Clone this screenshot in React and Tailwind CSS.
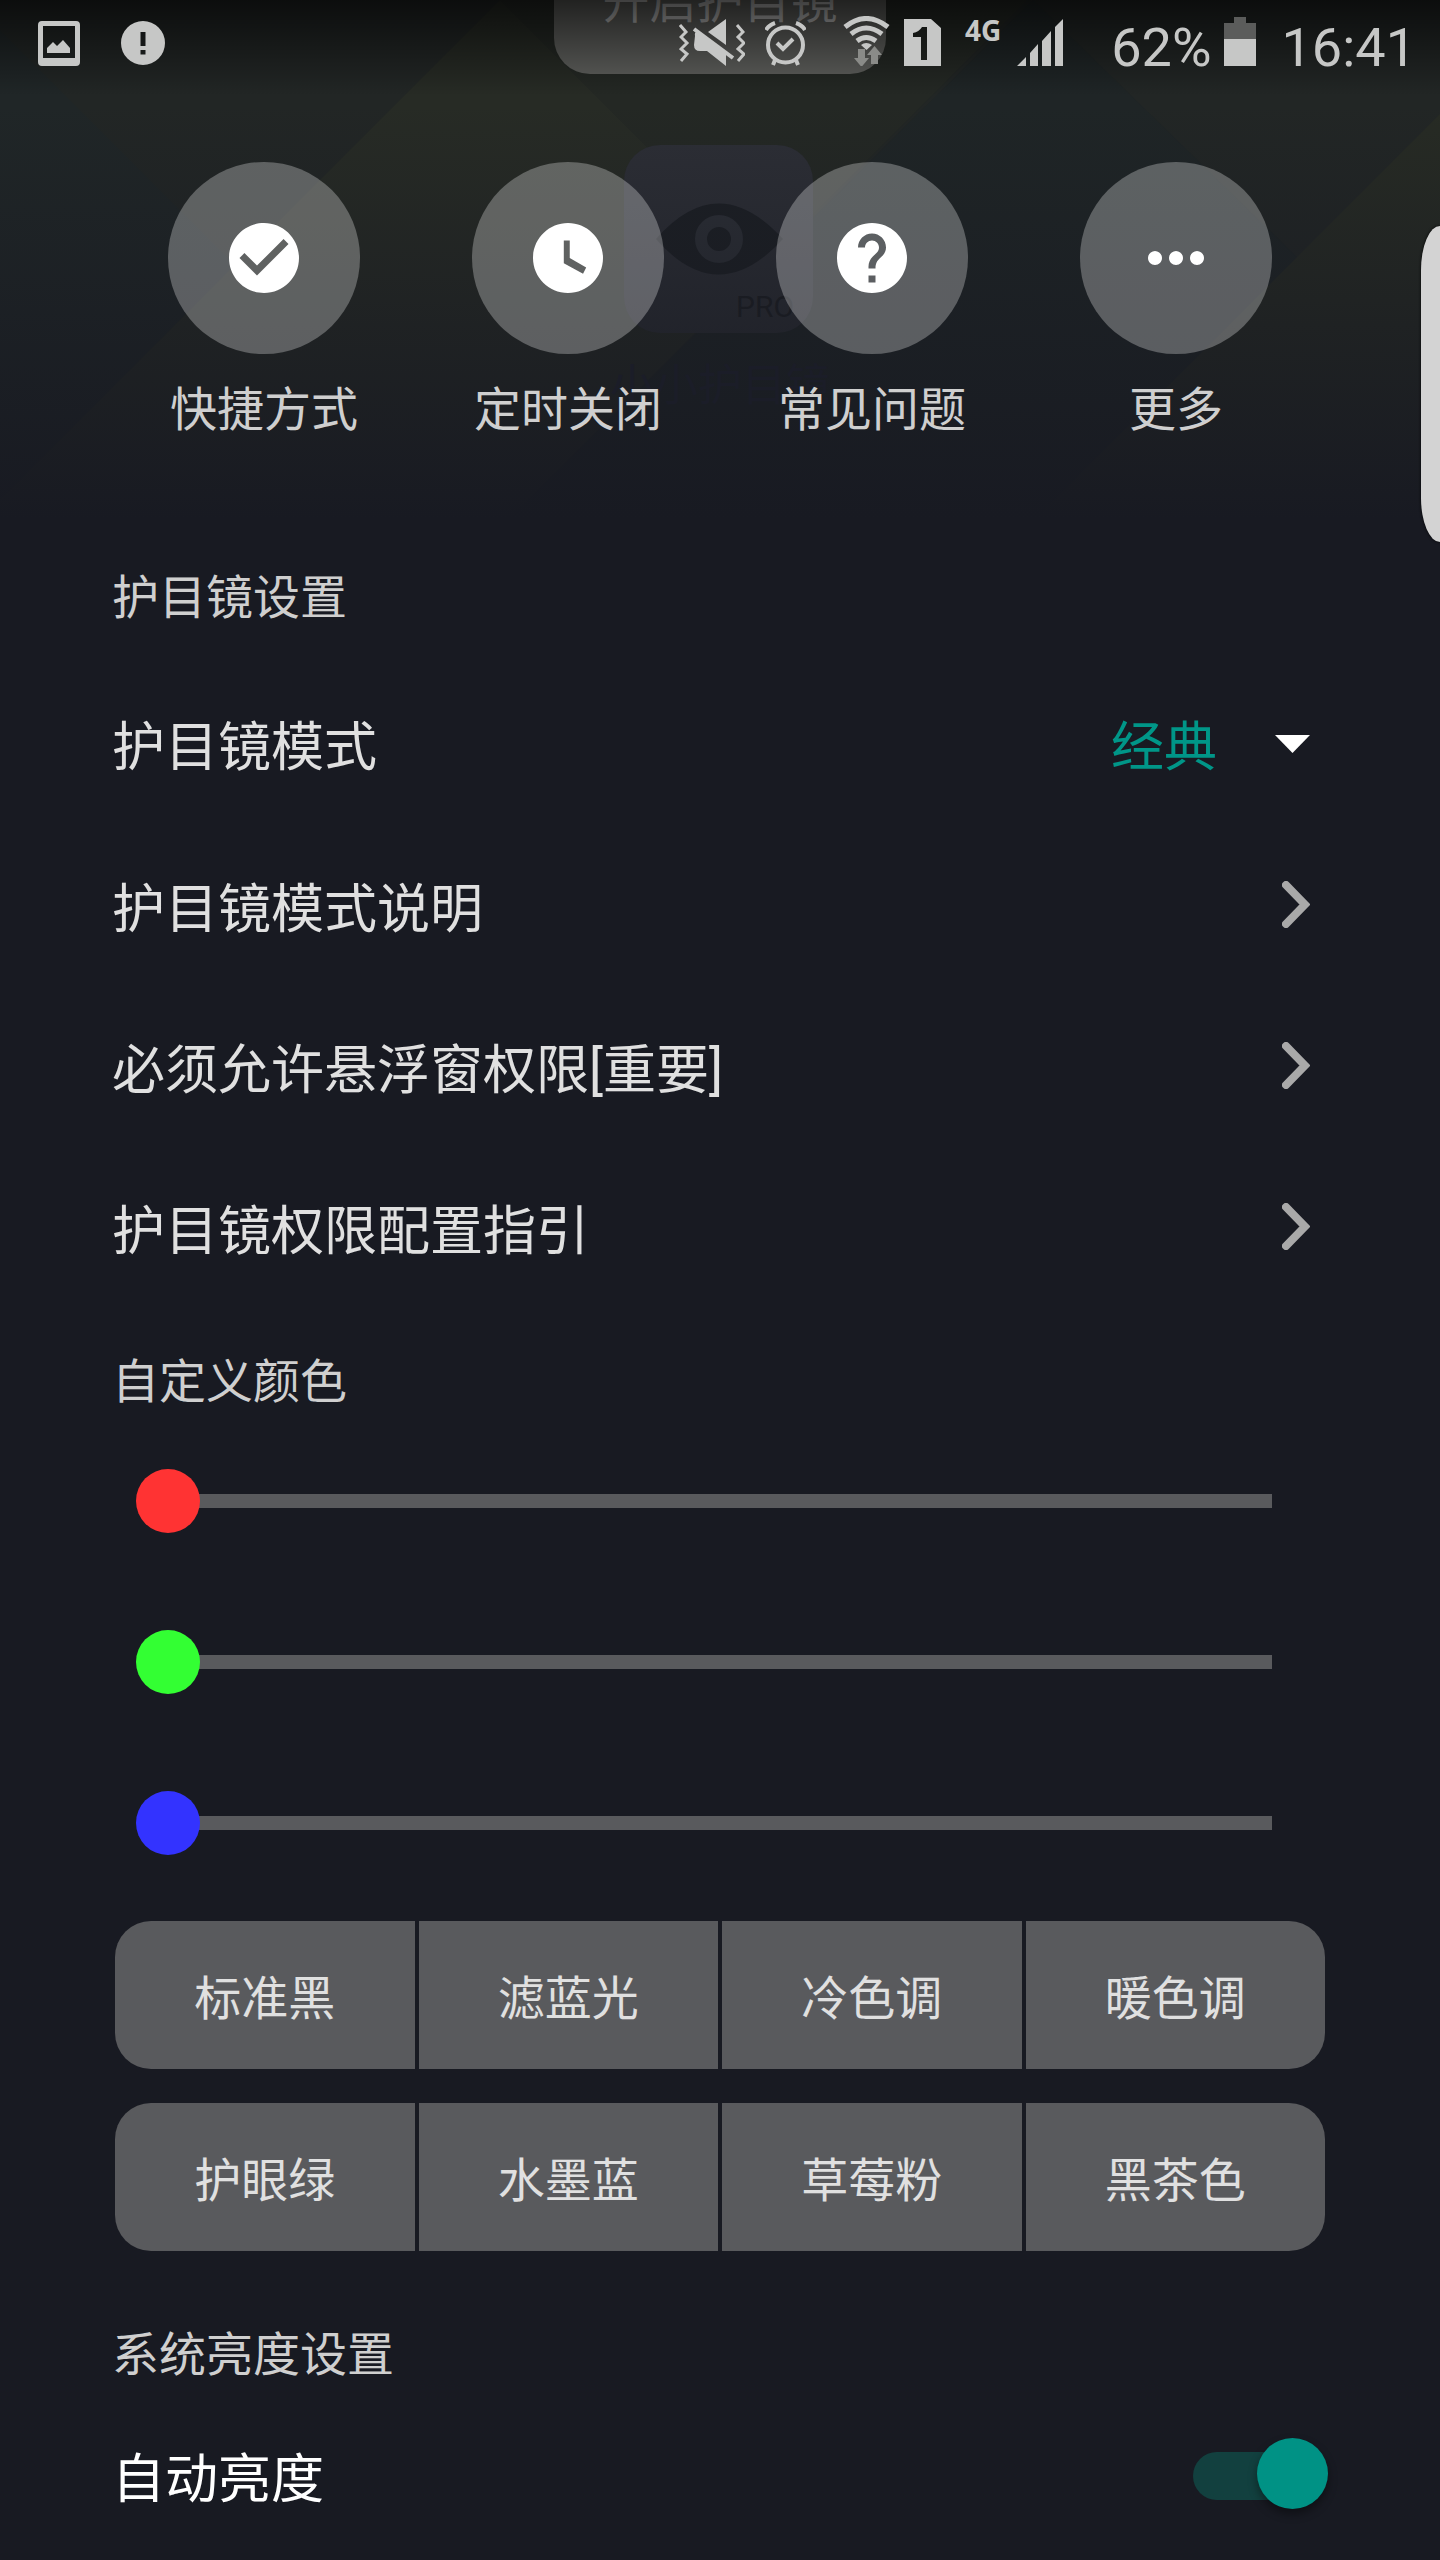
import React, { useState } from 'react';

const shortcuts = [
  {
    label: '快捷方式',
    path: 'M12 2C6.48 2 2 6.48 2 12s4.48 10 10 10 10-4.48 10-10S17.52 2 12 2zm-2 15l-5-5 1.41-1.41L10 14.17l7.59-7.59L19 8l-9 9z',
  },
  {
    label: '定时关闭',
    path: 'M12 2C6.500 2 2 6.500 2 12s4.500 10 10 10 10-4.500 10-10S17.500 2 12 2zm4.300 14.500L10.800 13.500V7h1.700v5l4.700 2.700-.9 1.800z',
  },
  {
    label: '常见问题',
    path: 'M12 2C6.48 2 2 6.48 2 12s4.48 10 10 10 10-4.48 10-10S17.52 2 12 2zm1 17h-2v-2h2v2zm2.07-7.75l-.9.92C13.45 12.9 13 13.5 13 15h-2v-.5c0-1.1.45-2.1 1.17-2.83l1.24-1.26c.37-.36.59-.86.59-1.41 0-1.1-.9-2-2-2s-2 .9-2 2H8c0-2.21 1.79-4 4-4s4 1.79 4 4c0 .88-.36 1.68-.93 2.25z',
  },
  {
    label: '更多',
    path: 'M6 10c-1.1 0-2 .9-2 2s.9 2 2 2 2-.9 2-2-.9-2-2-2zm12 0c-1.1 0-2 .9-2 2s.9 2 2 2 2-.9 2-2-.9-2-2-2zm-6 0c-1.1 0-2 .9-2 2s.9 2 2 2 2-.9 2-2-.9-2-2-2z',
  },
];

const links = ['护目镜模式说明', '必须允许悬浮窗权限[重要]', '护目镜权限配置指引'];

const presets = [
  ['标准黑', '滤蓝光', '冷色调', '暖色调'],
  ['护眼绿', '水墨蓝', '草莓粉', '黑茶色'],
];

const channels = [
  { name: '红色', thumb: '[&::-webkit-slider-thumb]:bg-[#ff3333]' },
  { name: '绿色', thumb: '[&::-webkit-slider-thumb]:bg-[#33ff33]' },
  { name: '蓝色', thumb: '[&::-webkit-slider-thumb]:bg-[#3333ff]' },
];

// Dimmed home page that shows through behind the settings panel
const Backdrop = () => (
  <svg
    className="absolute inset-x-0 top-0 w-full h-[520px]"
    viewBox="0 0 1440 520"
    preserveAspectRatio="xMidYMin slice"
    aria-hidden="true"
  >
    <defs>
      <linearGradient id="fade" x1="0" y1="0" x2="0" y2="1">
        <stop offset="0" stopColor="#181a22" stopOpacity="0" />
        <stop offset="0.2" stopColor="#181a22" stopOpacity="0" />
        <stop offset="1" stopColor="#181a22" stopOpacity="1" />
      </linearGradient>
      <linearGradient id="shade" x1="0" y1="0" x2="0" y2="1">
        <stop offset="0" stopColor="#000" stopOpacity="0.65" />
        <stop offset="1" stopColor="#000" stopOpacity="0" />
      </linearGradient>
    </defs>
    <rect width="1440" height="520" fill="#222625" />
    <path d="M0 30L235 265 0 500z" fill="#202627" />
    <path d="M500 0L764 264 508 520H0V500z" fill="#272b25" />
    <path d="M500 0H1027L764 264z" fill="#242824" />
    <path d="M1033 0L1300 260 1040 520H508z" fill="#1f2526" />
    <path d="M1440 114V520H1034z" fill="#272b24" />
    <rect x="624" y="145" width="189" height="188" rx="36" fill="#2d2f36" />
    <path d="M656 239Q718 168 783 239Q718 310 656 239z" fill="#1c1f24" />
    <circle cx="719" cy="239" r="18" fill="none" stroke="#2d3037" strokeWidth="12" />
    <text x="736" y="317" fontSize="30" fill="#1b1d22" fontFamily="Roboto, sans-serif">PRO</text>
    <rect width="1440" height="520" fill="url(#fade)" />
    <text x="720" y="401" fontSize="44" fill="#1b1d28" textAnchor="middle" fontFamily='"Noto Sans CJK SC", sans-serif'>
      小小护目镜
    </text>
    <rect x="554" y="-60" width="332" height="134" rx="36" fill="#5f605d" />
    <text x="720" y="18" fontSize="47" fill="#b5b5b5" textAnchor="middle" fontFamily='"Noto Sans CJK SC", sans-serif'>
      开启护目镜
    </text>
    <rect width="1440" height="96" fill="url(#shade)" />
  </svg>
);

const StatusBar = () => (
  <header className="relative flex items-baseline h-[86px] pt-4 pl-[38px] pr-6 text-[#c6c7c6] fill-[#c6c7c6] font-[Roboto,sans-serif] text-[54px] leading-[56px]">
    {/* Screenshot */}
    <svg width="42" height="45" viewBox="0 0 42 45">
      <path fillRule="evenodd" d="M4 0H38Q42 0 42 4V41Q42 45 38 45H4Q0 45 0 41V4Q0 0 4 0zM5 5V37H37V5z" />
      <path d="M9 32V27L15 21 19 25 25 19 32 27V32z" />
    </svg>
    {/* Alert */}
    <svg className="ml-[41px]" width="44" height="45" viewBox="0 0 44 45">
      <path fillRule="evenodd" d="M22 0A22 22 0 1 0 22 44A22 22 0 1 0 22 0zM19.500 11V25H24.500V11zM19.500 29V33.500H24.500V29z" />
    </svg>

    {/* Vibrate */}
    <svg className="ml-auto" width="66" height="47" viewBox="0 0 66 47">
      <path d="M1 6L7 13 2 18 8 24 2 30 8 35 2 42M58 6L64 13 59 18 65 24 59 30 65 35 59 42" fill="none" stroke="#c6c7c6" strokeWidth="3" />
      <path d="M29 13L47 0V26zM16 17Q15 12 20 13L47 34V47L28 32H21Q15 32 15 26z" />
      <path d="M15 10L54 39" fill="none" stroke="#c6c7c6" strokeWidth="4" />
    </svg>
    {/* Alarm */}
    <svg className="ml-5" width="41" height="45" viewBox="0 0 41 45">
      <g fill="none" stroke="#c6c7c6" strokeWidth="4">
        <circle cx="20.500" cy="24" r="17.500" />
        <path d="M12 22L18 28 28 18M1 9Q4 4 10 2M40 9Q37 4 31 2M10 39L8 44M31 39L33 44" />
      </g>
    </svg>
    {/* Wifi */}
    <svg className="ml-[37px]" width="47" height="50" viewBox="0 0 47 50">
      <g fill="none" stroke="#c6c7c6" strokeWidth="5">
        <path d="M2 11Q23 -6 45 11" />
        <path d="M8 18Q23 6 39 18" />
        <path d="M14 25Q23 18 33 25" />
      </g>
      <path d="M18 29Q23 25 29 29L23.500 34z" />
      <path d="M15 33H22V42H26L18.500 51 11 42H15zM28 48V39H24L31.500 30 39 39H35V48z" fill="#8a8b88" />
    </svg>
    {/* Sim */}
    <svg className="ml-[14px]" width="37" height="47" viewBox="0 0 37 47">
      <path fillRule="evenodd" d="M0 0H27L37 9V47H0zM18 8Q15 13 9 14V18H17V41H23V8z" />
    </svg>
    <span className="ml-6 self-start font-['Noto_Sans',sans-serif] font-bold text-[28px] leading-[28px]">4G</span>
    {/* Signal */}
    <svg className="ml-4" width="46" height="47" viewBox="0 0 46 47">
      <path d="M0 47L9 38V47zM13 34L21 25V47H13zM25 22L34 12V47H25zM38 8L46 0V47H38z" />
    </svg>
    <span className="ml-12">62%</span>
    {/* Battery */}
    <svg className="ml-3" width="32" height="49" viewBox="0 0 32 49">
      <path d="M10 0H22V6H32V22H0V6H10z" fill="#5b5c5b" />
      <path d="M0 22H32V49H0z" />
    </svg>
    <span className="ml-[26px]">16:41</span>
  </header>
);

const SectionTitle = ({ children }) => (
  <h2 className="text-[47px] leading-[56px] text-[#cfcfcf]">{children}</h2>
);

const App = () => {
  const [mode, setMode] = useState('经典');
  const [color, setColor] = useState([0, 0, 0]);
  const [autoBrightness, setAutoBrightness] = useState(true);

  const handleColor = (index, value) => {
    setColor(color.map((c, i) => (i === index ? Number(value) : c)));
  };

  return (
    <div className="relative min-h-screen overflow-hidden bg-[#181a22] font-['Noto_Sans_CJK_SC',sans-serif] text-[#e0e0e0]">
      <Backdrop />
      <StatusBar />

      {/* Edge panel handle */}
      <div className="absolute right-0 top-[226px] w-[19px] h-[316px] bg-[#d3d3d3] [border-radius:19px_0_0_19px/44px_0_0_44px] shadow-[0_0_3px_#000]" />

      <main className="relative px-28">
        <nav className="grid grid-cols-4 pt-[76px]">
          {shortcuts.map((item) => (
            <button key={item.label} className="flex flex-col items-center gap-6 text-[47px] leading-[56px] text-[#cfcfcf]">
              <span className="flex items-center justify-center size-48 rounded-full bg-white/28">
                <svg className="size-[84px] fill-white" viewBox="0 0 24 24">
                  <path d={item.path} />
                </svg>
              </span>
              {item.label}
            </button>
          ))}
        </nav>

        <section className="mt-[132px]">
          <SectionTitle>护目镜设置</SectionTitle>
          <div className="mt-[41px] text-[53px]">
            <div className="flex items-center justify-between h-[161px] pr-[18px]">
              <label htmlFor="mode">护目镜模式</label>
              <div className="relative flex items-center">
                <select
                  id="mode"
                  value={mode}
                  onChange={(e) => setMode(e.target.value)}
                  className="appearance-none bg-transparent pr-[93px] text-[#009688]"
                >
                  <option>经典</option>
                </select>
                <svg className="absolute right-0 pointer-events-none fill-white" width="35" height="18" viewBox="0 0 35 18">
                  <path d="M0 0H35L17.500 18z" />
                </svg>
              </div>
            </div>
            {links.map((text) => (
              <button
                key={text}
                className="flex items-center justify-between w-full h-[161px] pr-[18px] text-left font-[Roboto,'Noto_Sans_CJK_SC',sans-serif] leading-[normal]"
              >
                {text}
                <svg width="28" height="47" viewBox="0 0 28 47">
                  <path d="M4 4L23 23.500 4 43" fill="none" stroke="#a9a9a9" strokeWidth="8" strokeLinecap="round" />
                </svg>
              </button>
            ))}
          </div>
        </section>

        <section className="mt-[43px]">
          <SectionTitle>自定义颜色</SectionTitle>
          <div className="mt-[14px]">
            {channels.map((channel, index) => (
              <div key={channel.name} className="flex items-center h-[161px] px-6">
                <input
                  type="range"
                  min="0"
                  max="255"
                  aria-label={channel.name}
                  value={color[index]}
                  onChange={(e) => handleColor(index, e.target.value)}
                  className={`appearance-none w-full h-16 bg-[linear-gradient(#595a5d,#595a5d)] bg-no-repeat bg-center bg-[length:calc(100%-64px)_14px] [&::-webkit-slider-thumb]:appearance-none [&::-webkit-slider-thumb]:size-16 [&::-webkit-slider-thumb]:rounded-full ${channel.thumb}`}
                />
              </div>
            ))}
          </div>
          <div className="flex flex-col gap-[34px] mt-[18px] px-[3px]">
            {presets.map((row) => (
              <div key={row[0]} className="grid grid-cols-4 gap-1 overflow-hidden rounded-[36px]">
                {row.map((name) => (
                  <button key={name} className="h-[148px] bg-[#595a5d] text-[47px]">
                    {name}
                  </button>
                ))}
              </div>
            ))}
          </div>
        </section>

        <section className="mt-[72px]">
          <SectionTitle>系统亮度设置</SectionTitle>
          <div className="flex items-center justify-between h-[161px] mt-4 pr-[3px] text-[53px] text-white">
            <label htmlFor="auto">自动亮度</label>
            <input
              id="auto"
              type="checkbox"
              role="switch"
              checked={autoBrightness}
              onChange={(e) => setAutoBrightness(e.target.checked)}
              className="relative appearance-none w-[132px] h-12 rounded-full bg-[#4a4b4e] checked:bg-[#12403f] before:absolute before:-top-[14px] before:-left-[3px] before:size-[71px] before:rounded-full before:bg-[#bdbdbd] before:shadow-[0_5px_10px_rgba(0,0,0,0.4)] checked:before:left-auto checked:before:-right-[3px] checked:before:bg-[#009285]"
            />
          </div>
        </section>
      </main>
    </div>
  );
};

export default App;
